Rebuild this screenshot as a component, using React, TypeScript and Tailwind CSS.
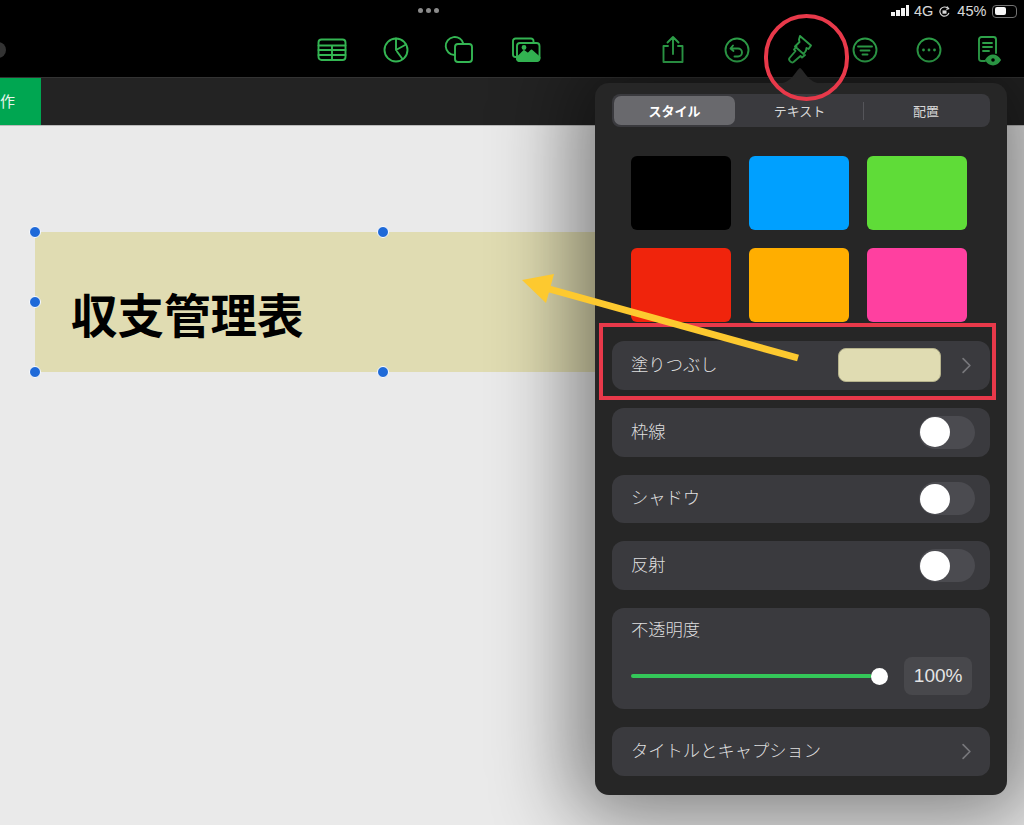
import type { ReactNode } from 'react';

const JP = "font-['Noto_Sans_CJK_JP','Noto_Sans',sans-serif]";

function Ico({ children, className = 'h-8 w-8' }: { children: ReactNode; className?: string }) {
  return (
    <svg viewBox="0 0 32 32" fill="none" stroke="#34b653" strokeWidth="1.9" strokeLinecap="round" strokeLinejoin="round" className={className}>
      {children}
    </svg>
  );
}

const toolbarLeft = [
  <Ico key="table">
    <rect x="2.5" y="5.5" width="27" height="20.5" rx="3" />
    <path d="M2.5 11.5h27M2.5 16h27M2.5 21h27M16 11.5V26" />
  </Ico>,
  <Ico key="chart">
    <circle cx="16" cy="16" r="11.5" />
    <path d="M16 4.500V16l10-5.500M17 17.500l5.500 7.500" />
  </Ico>,
  <Ico key="shape">
    <path d="M11.500 21a9 9 0 1 1 9-11" />
    <rect x="12" y="10" width="17" height="18" rx="3" />
  </Ico>,
  <Ico key="media" className="ml-[3px] h-8 w-8">
    <path d="M6 23h-.5A2.500 2.500 0 0 1 3 20.500V7a2.500 2.500 0 0 1 2.500-2.500H21A2.500 2.500 0 0 1 23.500 7v1" />
    <rect x="7" y="9" width="22.500" height="18" rx="3" />
    <path d="M7 24l7-7 4 3 3.500-3.500 8 7v.500a3 3 0 0 1-3 3H10a3 3 0 0 1-3-3z" fill="#34b653" />
    <circle cx="14" cy="13.500" r="1.500" fill="#34b653" />
  </Ico>,
];

function Toggle() {
  return (
    <div className="flex h-[33px] w-[56px] items-center rounded-full bg-[#4b4b50] pl-[1px]">
      <div className="h-[30px] w-[30px] rounded-full bg-white" />
    </div>
  );
}

function Chevron() {
  return (
    <svg viewBox="0 0 12 20" className="h-[17px] w-[11px]" fill="none" stroke="#77777b" strokeWidth="2" strokeLinecap="round" strokeLinejoin="round">
      <path d="M2 2l8 8-8 8" />
    </svg>
  );
}

function Row({ label, children, className = '' }: { label: string; children: ReactNode; className?: string }) {
  return (
    <div className={`flex h-[48.75px] items-center justify-between rounded-[12px] bg-[#3a3a3e] pl-[19px] ${className}`}>
      <span className="-mt-[3px] text-[17.3px] font-light text-[#dedede]">{label}</span>
      {children}
    </div>
  );
}

function Handle({ className }: { className: string }) {
  return <div className={`absolute h-3 w-3 rounded-full border-[1.5px] border-white bg-[#1f6ad8] ${className}`} />;
}

const swatches = ['bg-black', 'bg-[#00a0ff]', 'bg-[#5fdc38]', 'bg-[#f0240c]', 'bg-[#ffae00]', 'bg-[#ff40a0]'];

export default function App() {
  return (
    <div className={`relative h-[825px] w-[1024px] overflow-hidden bg-[#eaeaea] ${JP}`}>
      {/* top bars */}
      <div className="relative h-[78px] border-b border-[#333] bg-black">
        <div className="absolute left-[418px] top-[8px] flex gap-[3px]">
          <span className="h-[5px] w-[5px] rounded-full bg-[#8b8b8b]" />
          <span className="h-[5px] w-[5px] rounded-full bg-[#8b8b8b]" />
          <span className="h-[5px] w-[5px] rounded-full bg-[#8b8b8b]" />
        </div>
        <div className="absolute left-[-10px] top-[42px] h-4 w-4 rounded-full bg-[#333]" />
        <div className="absolute left-[891px] top-[3px] flex items-center font-['Liberation_Sans',sans-serif] text-[14.5px] leading-4 text-[#e4e4e4]">
          <div className="-mt-[2px] flex items-end gap-[1px]">
            <span className="h-[4px] w-[4px] bg-white" />
            <span className="h-[6px] w-[4px] bg-white" />
            <span className="h-[8px] w-[4px] bg-white" />
            <span className="h-[11px] w-[3px] bg-white" />
          </div>
          <span className="ml-[5px]">4G</span>
          <svg viewBox="0 0 12 12" className="ml-[6px] h-[11px] w-[11px]" fill="none" stroke="#e4e4e4" strokeWidth="1.300">
            <path d="M10.800 7.500A5 5 0 1 1 9.500 2.500" />
            <path d="M8.800 0.800 10.500 3 8 3.800" />
            <rect x="3.800" y="4.800" width="4.400" height="3.600" fill="#e4e4e4" stroke="none" />
          </svg>
          <span className="ml-[7px]">45%</span>
          <div className="ml-[6px] flex h-[13px] w-[25px] items-center rounded-[4px] border border-[#777] p-[1.5px]">
            <div className="h-full w-[11px] rounded-[2px] bg-white" />
          </div>
        </div>
        <div className="absolute left-[316px] top-[34px] flex gap-[31.5px]">{toolbarLeft}</div>
        <div className="absolute left-[657px] top-[34px] flex gap-[32px]">
          <Ico>
            <path d="M11 12H6.500v16h19V12H21M16 20V3M10.500 8.500 16 3l5.500 5.500" />
          </Ico>
          <Ico>
            <circle cx="16" cy="16" r="11.500" />
            <path d="M12 11.500 9.500 14.500 12.500 17M10 14.500h7a4 4 0 0 1 0 8h-3.500" />
          </Ico>
          <Ico>
            <path d="M15 2l11 9.500-2.500 3.500-2-1-.5 2.500-1 1.500-1.500 2-8.500-7.500 3-3 1.500-1.500-.5-2.500z" />
            <path d="M11.500 12.500 9 15.500l1.500 1.500-6 7c-1.500 2 2 5.500 4 4l7-6 1.500 1.500 3-2.500" />
          </Ico>
          <Ico>
            <circle cx="16" cy="16" r="11.500" />
            <path d="M9 12.500h14M11.500 16.500h9M13.500 20.500h5" />
          </Ico>
          <Ico>
            <circle cx="16" cy="16" r="11.500" />
            <path d="M10.500 16h.01M16 16h.01M21.500 16h.01" strokeWidth="2.800" />
          </Ico>
          <Ico className="-ml-[5px] h-8 w-8">
            <path d="M24 19V5.500A2.500 2.500 0 0 0 21.500 3h-12A2.500 2.500 0 0 0 7 5.500v19A2.500 2.500 0 0 0 9.500 27H13" />
            <path d="M11 9h9M11 13h9M11 17h6" />
            <path d="M14 26c2-3 4-4.500 7-4.500s5 1.500 7 4.500c-2 3-4 4.500-7 4.500s-5-1.500-7-4.500z" fill="#34b653" />
            <circle cx="21" cy="26" r="1.800" fill="#000" stroke="none" />
          </Ico>
        </div>
      </div>
      <div className="flex h-[48px] border-b border-[#bbb] bg-[#232323]">
        <div className="flex w-[41px] items-center bg-[#00a651] text-[15px] text-[#e8f5ec]">
          <span>作</span>
        </div>
      </div>

      {/* shape on the canvas */}
      <div className="absolute left-[35px] top-[232px] flex h-[140px] w-[600px] items-end bg-[#e0dcb2] pb-[27px] pl-[36px]">
        <span className="text-[46.5px] font-bold leading-[64px] text-black">収支管理表</span>
      </div>
      <Handle className="left-[29px] top-[226px]" />
      <Handle className="left-[377px] top-[226px]" />
      <Handle className="left-[29px] top-[296px]" />
      <Handle className="left-[29px] top-[366px]" />
      <Handle className="left-[377px] top-[366px]" />

      {/* popover */}
      <div className="absolute left-[595px] top-[83px] h-[712px] w-[412px] rounded-[14px] bg-[#262626] px-[17px] pt-[11px] shadow-[0_0_80px_24px_rgba(0,0,0,0.45)]">
        <svg className="absolute left-[180px] top-[-15px] h-4 w-[50px]" viewBox="0 0 50 16" fill="#262626">
          <path d="M0 16c10 0 15-4 19-9 3-4 5-7 6-7s3 3 6 7c4 5 9 9 19 9z" />
        </svg>
        <div className="flex h-[33px] items-center rounded-[8px] bg-[#3a3a3e] p-[2px] text-[13px] text-[#d8d8d8]">
          <div className="flex h-full w-[121px] items-center justify-center rounded-[7px] bg-[#69696d] font-bold text-white">スタイル</div>
          <div className="ml-[1px] flex flex-1 items-center justify-center">テキスト</div>
          <div className="h-[18px] w-px bg-[#55555a]" />
          <div className="flex w-[124px] items-center justify-center">配置</div>
        </div>
        <div className="mt-[29px] grid grid-cols-[100px_100px_100px] gap-x-[18px] gap-y-[18px] px-[19px]">
          {swatches.map((c) => (
            <div key={c} className={`h-[74px] rounded-[6px] ${c}`} />
          ))}
        </div>
        <div className="mt-[19px] flex flex-col gap-[18px]">
          <Row label="塗りつぶし" className="pr-[18px]">
            <div className="flex items-center gap-[20px]">
              <div className="h-[34px] w-[103px] rounded-[8px] border border-[#b5b28c] bg-[#e0dcb2]" />
              <Chevron />
            </div>
          </Row>
          <Row label="枠線" className="pr-[15px]"><Toggle /></Row>
          <Row label="シャドウ" className="pr-[15px]"><Toggle /></Row>
          <Row label="反射" className="pr-[15px]"><Toggle /></Row>
          <div className="h-[101px] rounded-[12px] bg-[#3a3a3e] pl-[19px] pr-[18px] pt-[9px]">
            <div className="text-[17.3px] font-light leading-6 text-[#dedede]">不透明度</div>
            <div className="mt-[16px] flex items-center">
              <div className="h-[4px] w-[242px] rounded-full bg-[#34c759]" />
              <div className="ml-[-1px] h-[17px] w-[17px] rounded-full bg-white" />
              <div className="ml-[16px] flex h-[38px] w-[68px] items-center justify-center rounded-[8px] bg-[#48484c] font-['Liberation_Sans',sans-serif] text-[19px] text-[#e4e4e4]">100%</div>
            </div>
          </div>
          <Row label="タイトルとキャプション" className="pr-[18px]"><Chevron /></Row>
        </div>
      </div>

      {/* annotations */}
      <div className="absolute left-[764px] top-[14px] h-[87px] w-[85px] rounded-full border-[4px] border-[#e8394a]" />
      <div className="absolute left-[599px] top-[323px] h-[77px] w-[397px] border-[4px] border-[#e8394a]" />
      <svg className="absolute left-0 top-0 h-[825px] w-[1024px]" viewBox="0 0 1024 825">
        <path d="M798 358 542 287" stroke="#fdc92f" strokeWidth="7" />
        <path d="M522 280 554 274 546 303z" fill="#fdc92f" />
      </svg>
    </div>
  );
}
